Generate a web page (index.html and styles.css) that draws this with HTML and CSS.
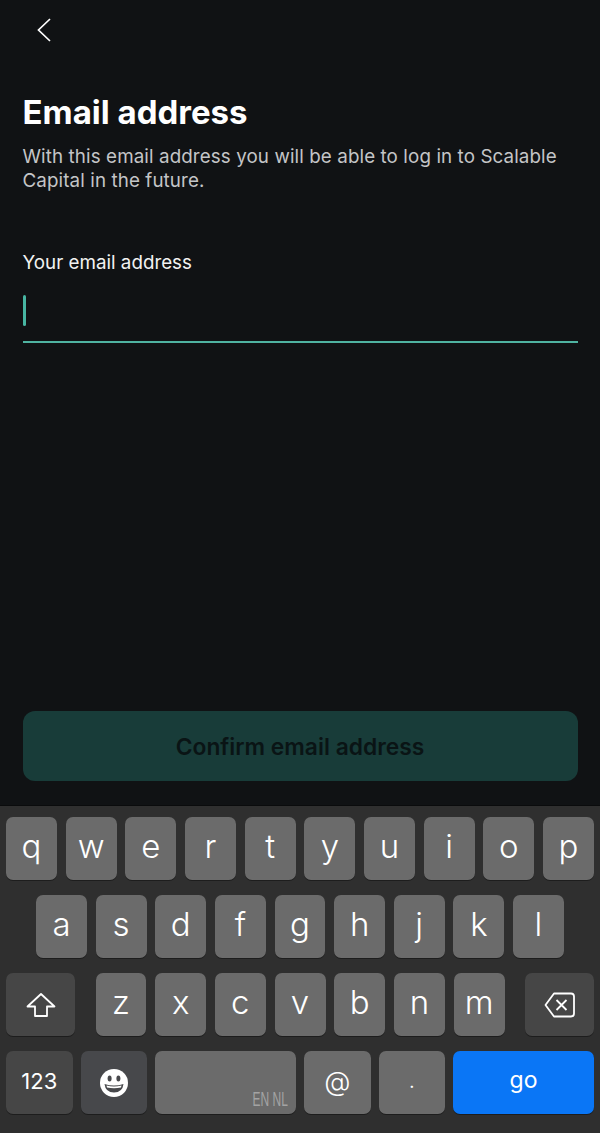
FILE: index.html
```html
<!DOCTYPE html>
<html lang="en">
<head>
<meta charset="utf-8">
<title>Email address</title>
<link rel="stylesheet" href="styles.css">
</head>
<body>
<div class="screen">
  <main class="content">
    <button class="back" aria-label="Back">
      <svg width="16" height="26" viewBox="0 0 16 26"><path d="M14 2 L2.5 13 L14 24" fill="none" stroke="#fff" stroke-width="1.7"/></svg>
    </button>
    <h1 class="title">Email address</h1>
    <p class="intro">With this email address you will be able to log in to Scalable Capital in the future.</p>
    <label class="label">Your email address</label>
    <div class="field"><span class="caret"></span></div>
    <div class="spacer"></div>
    <button class="confirm">Confirm email address</button>
  </main>
  <section class="keyboard">
    <div class="row">
      <div class="key">q</div><div class="key">w</div><div class="key">e</div><div class="key">r</div><div class="key">t</div><div class="key">y</div><div class="key">u</div><div class="key">i</div><div class="key">o</div><div class="key">p</div>
    </div>
    <div class="row row-home">
      <div class="key">a</div><div class="key">s</div><div class="key">d</div><div class="key">f</div><div class="key">g</div><div class="key">h</div><div class="key">j</div><div class="key">k</div><div class="key">l</div>
    </div>
    <div class="row">
      <div class="key mod shift">
        <svg width="30" height="26" viewBox="0 0 30 26"><path d="M15 2 L28.5 14.5 H21 V24 H9 V14.5 H1.5 Z" fill="none" stroke="#fff" stroke-width="1.8" stroke-linejoin="round"/></svg>
      </div>
      <div class="letters">
        <div class="key">z</div><div class="key">x</div><div class="key">c</div><div class="key">v</div><div class="key">b</div><div class="key">n</div><div class="key">m</div>
      </div>
      <div class="key mod shift">
        <svg width="31" height="26" viewBox="0 0 31 26"><path d="M10 1.5 H27 Q30 1.5 30 4.5 V21.5 Q30 24.5 27 24.5 H10 L1.5 13 Z" fill="none" stroke="#fff" stroke-width="1.8" stroke-linejoin="round"/><path d="M12.5 8 L22.5 18 M22.5 8 L12.5 18" stroke="#fff" stroke-width="1.8"/></svg>
      </div>
    </div>
    <div class="row row-bottom">
      <div class="key mod num">123</div>
      <div class="key mod emoji">
        <svg width="28" height="28" viewBox="0 0 28 28"><circle cx="14" cy="14" r="14" fill="#fff"/><ellipse cx="9.6" cy="9.5" rx="2" ry="3" fill="#47484b"/><ellipse cx="18.4" cy="9.5" rx="2" ry="3" fill="#47484b"/><path d="M4.5 15 Q14 18 23.5 15 Q22.5 23.5 14 23.5 Q5.5 23.5 4.5 15 Z" fill="#47484b"/><path d="M6.5 16.6 Q14 18.6 21.5 16.6 L21 18.5 Q14 20 7 18.5 Z" fill="#fff"/></svg>
      </div>
      <div class="key space"><span class="lang">EN NL</span></div>
      <div class="key num at">@</div>
      <div class="key num dot">.</div>
      <div class="key go">go</div>
    </div>
  </section>
</div>
</body>
</html>
```
FILE: styles.css
```css
* { box-sizing: border-box; }
html, body { margin: 0; height: 100%; }
body { background: #101214; font-family: Inter, "Liberation Sans", sans-serif; color: #fff; }
.screen { width: 600px; height: 1133px; display: flex; flex-direction: column; overflow: hidden; }
.content { flex: 1; display: flex; flex-direction: column; padding: 0 22.5px 25px 22.5px; min-height: 0; }
.back { align-self: flex-start; background: none; border: 0; padding: 0; margin: 17px 0 0 13px; height: 26px; display: block; line-height: 0; }
.title { margin: 50px 0 0; font-size: 33px; font-weight: 700; line-height: 39px; }
.intro { margin: 13px 0 0; font-size: 18.8px; line-height: 23.5px; color: #c4c5c7; letter-spacing: 0.1px; }
.label { margin-top: 58.5px; display: block; font-size: 18.8px; line-height: 24px; color: #f2f2f2; }
.field { margin-top: 20px; height: 48px; border-bottom: 2px solid #4fb3a1; }
.caret { display: block; width: 3px; height: 31px; background: #47b5a2; border-radius: 2px; }
.spacer { flex: 1; }
.confirm { height: 70px; border: 0; border-radius: 12px; background: #183c39; color: #0a1415; font: 600 22.8px Inter, "Liberation Sans", sans-serif; padding: 0; }
.keyboard { height: 327px; flex: none; background: #2f2f2f; padding: 11px 6px 0; display: flex; flex-direction: column; gap: 15px; box-shadow: 0 -1px 0 #0a0b0c; }
.row { display: flex; gap: 8.7px; height: 63px; justify-content: space-between; }
.row-home { padding: 0 30px; }
.row-bottom { gap: 8px; }
.letters { display: flex; gap: 8.7px; flex: 0 0 409px; }
.key { flex: 1; min-width: 0; display: flex; align-items: center; justify-content: center; background: #6b6b6b; border-radius: 7px; box-shadow: 0 1px 0 #1d1d1d; font-size: 33px; font-weight: 300; color: #fff; padding-bottom: 5px; }
.mod { background: #464646; }
.shift { flex: 0 0 69px; padding-bottom: 0; }
.num { flex: 0 0 66.5px; font-size: 22px; font-weight: 400; padding-bottom: 3px; }
.at { font-size: 27px; font-weight: 300; }
.emoji { flex: 0 0 66.5px; background: #47484b; padding-bottom: 0; }
.space { flex: 0 0 141px; position: relative; padding-bottom: 0; }
.lang { position: absolute; right: 8px; bottom: 3px; font-family: "Liberation Sans", sans-serif; font-size: 20px; font-weight: 400; color: #a3a3a3; transform: scaleX(0.6); transform-origin: right; white-space: nowrap; }
.dot { font-size: 18px; font-weight: 400; }
.go { flex: 0 0 141px; background: #0a76f6; font-size: 23px; font-weight: 400; padding-bottom: 5px; }
```
